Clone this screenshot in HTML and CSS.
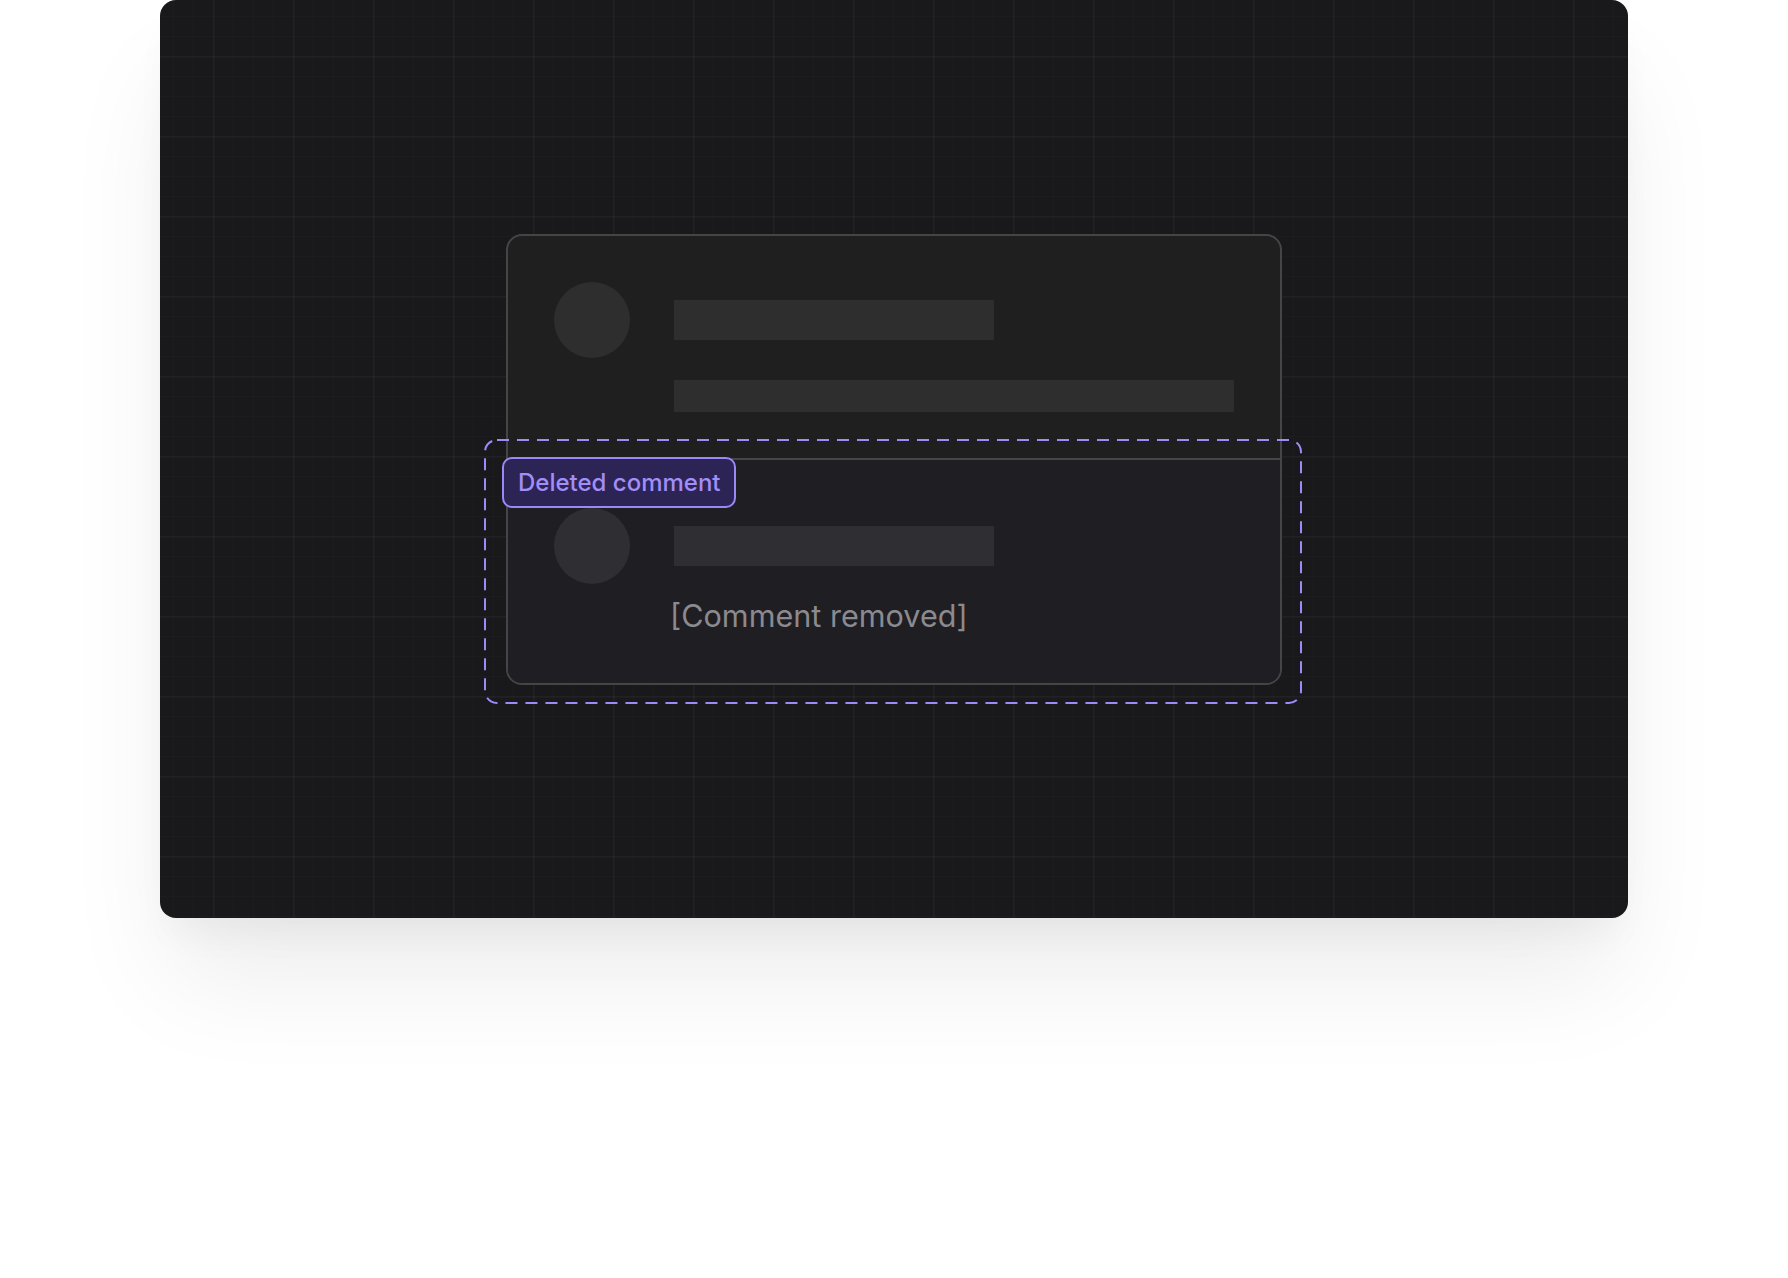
FILE: index.html
```html
<!DOCTYPE html>
<html lang="en">
<head>
<meta charset="utf-8">
<title>Deleted comment</title>
<link rel="stylesheet" href="styles.css">
</head>
<body>
<div class="stage">
  <div class="panel">
    <div class="card">
      <div class="comment">
        <div class="avatar"></div>
        <div class="body">
          <div class="bar bar-name"></div>
          <div class="bar bar-text"></div>
        </div>
      </div>
      <div class="comment comment-deleted">
        <div class="avatar"></div>
        <div class="body">
          <div class="bar bar-name"></div>
          <p class="removed">[Comment removed]</p>
        </div>
        <div class="highlight">
          <svg class="highlight-frame" width="100%" height="100%" aria-hidden="true">
            <rect x="1" y="1" width="816" height="263" rx="12" ry="12"></rect>
          </svg>
          <span class="badge">Deleted comment</span>
        </div>
      </div>
    </div>
  </div>
</div>
</body>
</html>
```
FILE: styles.css
```css
html, body {
  margin: 0;
  padding: 0;
  background: #ffffff;
}

body {
  font-family: Inter, "Noto Sans", "Liberation Sans", sans-serif;
}

.stage {
  padding: 0 160px;
  height: 1278px;
  box-sizing: border-box;
}

.panel {
  height: 918px;
  border-radius: 16px;
  background-color: #19191b;
  background-image:
    linear-gradient(to right, rgba(255, 255, 255, 0.022) 2px, transparent 2px),
    linear-gradient(to bottom, rgba(255, 255, 255, 0.022) 2px, transparent 2px),
    linear-gradient(to right, rgba(255, 255, 255, 0.012) 1px, transparent 1px),
    linear-gradient(to bottom, rgba(255, 255, 255, 0.012) 1px, transparent 1px);
  background-size: 80px 80px, 80px 80px, 20px 20px, 20px 20px;
  background-position: 53px 56px, 53px 56px, 53px 56px, 53px 56px;
  box-shadow: 0 70px 110px -10px rgba(0, 0, 0, 0.075), 0 24px 40px -12px rgba(0, 0, 0, 0.05);
  display: flex;
  align-items: center;
  justify-content: center;
}

.card {
  width: 776px;
  box-sizing: border-box;
  border: 2px solid #454547;
  border-radius: 16px;
  background: #1f1f1f;
}

.comment {
  display: flex;
  gap: 44px;
  padding: 46px 46px 46px;
}

.avatar {
  width: 76px;
  height: 76px;
  flex: none;
  border-radius: 50%;
  background: #2e2e2e;
}

.body {
  flex: 1;
  display: flex;
  flex-direction: column;
  align-items: flex-start;
}

.bar {
  background: #2e2e2e;
}

.bar-name {
  width: 320px;
  height: 40px;
  margin-top: 18px;
}

.bar-text {
  width: 100%;
  height: 32px;
  margin-top: 40px;
}

.comment-deleted {
  position: relative;
  border-top: 2px solid #454547;
  background: #1f1e23;
  border-radius: 0 0 14px 14px;
  padding: 48px 46px 45px;
}

.comment-deleted .avatar,
.comment-deleted .bar {
  background: #2f2e33;
}

.removed {
  margin: 27px 0 0 -4px;
  font-size: 30.6px;
  line-height: 45px;
  font-weight: 400;
  color: #8b8a8f;
}

.highlight {
  position: absolute;
  top: -21px;
  left: -24px;
  right: -22px;
  bottom: -21px;
  pointer-events: none;
}

.highlight-frame {
  position: absolute;
  inset: 0;
  overflow: visible;
}

.highlight-frame rect {
  fill: none;
  stroke: #9d8bf7;
  stroke-width: 2;
  stroke-dasharray: 12 8;
}

.badge {
  position: absolute;
  top: 18px;
  left: 18px;
  padding: 8px 13px 8px 14px;
  border: 2px solid #9c87f6;
  border-radius: 10px;
  background: #2d2456;
  color: #a18ef8;
  font-size: 24px;
  line-height: 31px;
  font-weight: 500;
  white-space: nowrap;
}
```
